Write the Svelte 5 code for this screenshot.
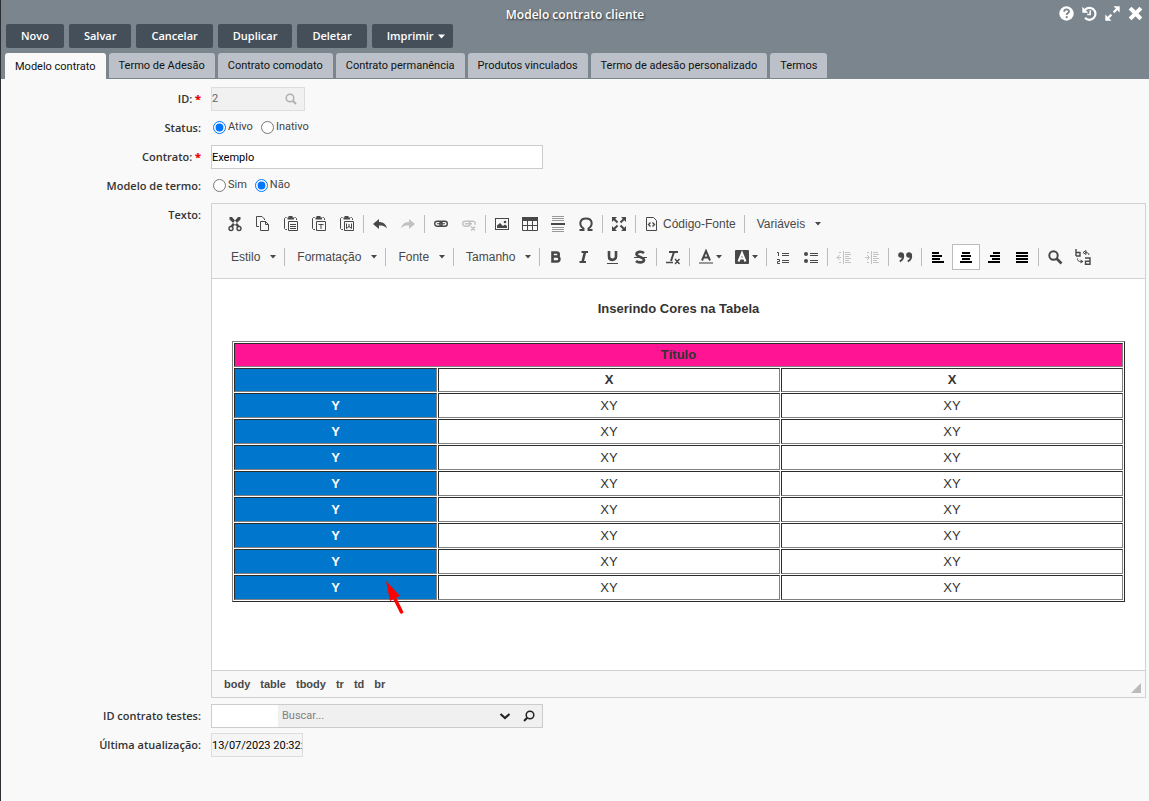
<script lang="ts">
  const actions = ['Novo', 'Salvar', 'Cancelar', 'Duplicar', 'Deletar'];
  const tabs = [
    'Modelo contrato',
    'Termo de Adesão',
    'Contrato comodato',
    'Contrato permanência',
    'Produtos vinculados',
    'Termo de adesão personalizado',
    'Termos',
  ];
  const path = ['body', 'table', 'tbody', 'tr', 'td', 'br'];
  const rows = Array.from({ length: 8 }, () => ['Y', 'XY', 'XY']);

  let activeTab = $state(0);
  let status = $state('ativo');
  let termo = $state('nao');
  let contrato = $state('Exemplo');
  let contratoTeste = $state('');
  let busca = $state('');
  let align = $state('center');

  const alignments = [
    { id: 'left', title: 'Alinhar Esquerda', d: 'M2 3h7v2H2zM2 6h10v2H2zM2 9h8v2H2zM2 12h12v2H2z' },
    { id: 'center', title: 'Centralizar', d: 'M4 3h8v2H4zM3 6h10v2H3zM4 9h8v2H4zM2 12h12v2H2z' },
    { id: 'right', title: 'Alinhar Direita', d: 'M7 3h7v2H7zM4 6h10v2H4zM6 9h8v2H6zM2 12h12v2H2z' },
    { id: 'justify', title: 'Justificado', d: 'M2 3h12v2H2zM2 6h12v2H2zM2 9h12v2H2zM2 12h12v2H2z' },
  ];
</script>

{#snippet sep()}
  <span class="sep"></span>
{/snippet}

{#snippet caret()}
  <svg class="caret" width="6" height="4" viewBox="0 0 6 4"><path d="M0 0h6L3 3.5z" /></svg>
{/snippet}

{#snippet combo(label: string)}
  <button class="combo" type="button">{label}{@render caret()}</button>
{/snippet}

<!-- clipboard outline shared by the three paste buttons -->
{#snippet clipboard()}
  <path d="M3.5 1.5h-1l-1 1v10l1 1H4M11.500 1.500h1l1 1V4" class="line" />
  <path d="M4.500 2.500v1h6.500v-2H9.500V0h-4v1.500h-1z" />
  <path d="M5.5 5.5h9v9h-9z" class="line" />
{/snippet}

<div class="window">
  <header>
    <div class="titlebar">
      <h1>Modelo contrato cliente</h1>
      <div class="tools">
        <button type="button" aria-label="Ajuda">
          <svg width="15" height="15" viewBox="0 0 15 15">
            <circle cx="7.5" cy="7.5" r="7.2" fill="#fff" />
            <path d="M5.2 5.8c0-3.2 4.8-3 4.8-.4 0 1.7-2.3 1.6-2.3 3.6" fill="none" stroke="#7b858e" stroke-width="1.9" />
            <rect x="6.7" y="10.2" width="2" height="2" fill="#7b858e" />
          </svg>
        </button>
        <button type="button" aria-label="Histórico">
          <svg width="15" height="15" viewBox="0 0 15 15">
            <path d="M2.8 4A6 6 0 1 1 3 11.8" fill="none" stroke="#fff" stroke-width="2.2" />
            <path d="M.3 .8v6h6z" fill="#fff" />
            <path d="M8.2 4.2v4.3H5.2" fill="none" stroke="#fff" stroke-width="1.5" />
          </svg>
        </button>
        <button type="button" aria-label="Expandir">
          <svg width="15" height="15" viewBox="0 0 15 15">
            <path d="M8.5.3h6.2v6.2zM.3 8.5v6.2h6.2z" fill="#fff" />
            <path d="M12 3L8.6 6.4M6.4 8.6L3 12" stroke="#fff" stroke-width="2.2" />
          </svg>
        </button>
        <button type="button" aria-label="Fechar">
          <svg width="15" height="15" viewBox="0 0 15 15">
            <path d="M3.500 3.500l8 8M11.500 3.500l-8 8" stroke="#fff" stroke-width="4" stroke-linecap="square" />
          </svg>
        </button>
      </div>
    </div>
    <div class="actions">
      {#each actions as action}
        <button type="button">{action}</button>
      {/each}
      <button type="button" class="drop">Imprimir
        <svg width="7" height="5" viewBox="0 0 7 5"><path d="M0 0.5h7L3.5 4.5z" fill="#fff" /></svg>
      </button>
    </div>
    <nav>
      {#each tabs as tab, i}
        <button type="button" class:active={activeTab === i} onclick={() => (activeTab = i)}>{tab}</button>
      {/each}
    </nav>
  </header>

  <form>
    <label class="name" for="id">ID: <b>*</b></label>
    <div class="lookup">
      <input id="id" type="text" value="2" readonly />
      <svg width="12" height="12" viewBox="0 0 12 12" fill="none" stroke="#b0b0b0">
        <circle cx="5" cy="5" r="3.8" stroke-width="1.5" />
        <path d="M7.8 7.8l3.2 3.2" stroke-width="2" />
      </svg>
    </div>

    <span class="name" id="status">Status:</span>
    <div class="radios" role="radiogroup" aria-labelledby="status">
      <label><input type="radio" name="status" value="ativo" bind:group={status} />Ativo</label>
      <label><input type="radio" name="status" value="inativo" bind:group={status} />Inativo</label>
    </div>

    <label class="name" for="contrato">Contrato: <b>*</b></label>
    <input id="contrato" class="field" type="text" bind:value={contrato} />

    <span class="name" id="termo">Modelo de termo:</span>
    <div class="radios" role="radiogroup" aria-labelledby="termo">
      <label><input type="radio" name="termo" value="sim" bind:group={termo} />Sim</label>
      <label><input type="radio" name="termo" value="nao" bind:group={termo} />Não</label>
    </div>

    <span class="name">Texto:</span>
    <div class="editor">
      <div class="toolbar">
        <div class="bar">
          <button type="button" title="Recortar">
            <svg viewBox="0 0 16 16">
              <path d="M2.500 1H5l8 9.500-2.500 .8L2.500 3.500zM13.500 1H11L3 10.500l2.500 .8 8-7.800z" />
              <circle cx="4" cy="12.500" r="2" class="line thick" />
              <circle cx="12" cy="12.500" r="2" class="line thick" />
            </svg>
          </button>
          <button type="button" title="Copiar">
            <svg viewBox="0 0 16 16">
              <path d="M4 10.500H1.500v-10H7l2.500 2.500v1M5.500 5.500h5l3 3v6h-8zM10.500 5.500v3h3" class="line" />
            </svg>
          </button>
          <button type="button" title="Colar">
            <svg viewBox="0 0 16 16">{@render clipboard()}<path d="M7 8.500h6M7 10.500h6M7 12.500h6" class="line" /></svg>
          </button>
          <button type="button" title="Colar como Texto sem Formatação">
            <svg viewBox="0 0 16 16">{@render clipboard()}<path d="M7.500 8.500h5M10 8.500v4.500" class="line" /></svg>
          </button>
          <button type="button" title="Colar do Word">
            <svg viewBox="0 0 16 16">{@render clipboard()}<path d="M7.500 7.500v5l2.500-2 2.500 2v-5M10 8v3" class="line" /></svg>
          </button>
          {@render sep()}
          <button type="button" title="Desfazer">
            <svg viewBox="0 0 16 16"><path d="M1 8l6-5v3c4 0 7 2 8 6.500-2-2.500-4.500-3-8-3V13z" /></svg>
          </button>
          <button type="button" title="Refazer" disabled>
            <svg viewBox="0 0 16 16"><path d="M15 8L9 3v3c-4 0-7 2-8 6.500 2-2.500 4.500-3 8-3V13z" /></svg>
          </button>
          {@render sep()}
          <button type="button" title="Inserir Link">
            <svg viewBox="0 0 16 16">
              <rect x="1.700" y="5.200" width="7.500" height="5" rx="2.500" class="line thick" />
              <rect x="6.800" y="5.200" width="7.500" height="5" rx="2.500" class="line thick" />
              <path d="M4 7.200h8v1H4z" />
            </svg>
          </button>
          <button type="button" title="Remover Link" disabled>
            <svg viewBox="0 0 16 16">
              <rect x="1.700" y="5.200" width="7.500" height="5" rx="2.500" class="line thick" />
              <path d="M7 5.200h5a2.500 2.500 0 0 1 2 3.500M4 7.700h7M10 10.500l4 4M14 10.500l-4 4" class="line thick" />
            </svg>
          </button>
          {@render sep()}
          <button type="button" title="Imagem">
            <svg viewBox="0 0 16 16">
              <rect x="1.500" y="2.500" width="13" height="11" class="line" />
              <path d="M3 12V9.500L6 7l3 3 2-1.500 2 1.500v2z" />
              <circle cx="11" cy="6" r="1.300" />
            </svg>
          </button>
          <button type="button" title="Tabela">
            <svg viewBox="0 0 16 16">
              <path d="M0 1h16v4H0z" />
              <path d="M.5 2v12.500h15V2M0 9.500h16M5.500 5v9.500M10.500 5v9.500" class="line" />
            </svg>
          </button>
          <button type="button" title="Inserir Linha Horizontal">
            <svg viewBox="0 0 16 16">
              <path d="M2 .5h12M2 2.500h12M2 4.500h12M2 11.500h12M2 13.500h12M2 15.500h12" class="line pale" />
              <path d="M1 7h14v2H1z" />
            </svg>
          </button>
          <button type="button" title="Inserir Caractere Especial">
            <svg viewBox="0 0 16 16">
              <path d="M1.500 14h4v-1.500C.5 9 1.500 2.500 8 2.500s7.500 6.500 2.500 10V14h4" class="line bold" />
            </svg>
          </button>
          {@render sep()}
          <button type="button" title="Maximizar">
            <svg viewBox="0 0 16 16">
              <path d="M1 1h5L1 6zM15 1v5l-5-5zM1 15v-5l5 5zM15 15h-5l5-5z" />
              <path d="M3 3l3.500 3.500M13 3L9.500 6.500M3 13l3.500-3.500M13 13L9.500 9.500" class="line bold" />
            </svg>
          </button>
          {@render sep()}
          <button type="button" class="source">
            <svg viewBox="0 0 16 16">
              <path d="M2.500 1.500h7l3 3v10h-10z" class="line" />
              <path d="M6.500 6.500L4.500 8.500l2 2M8.500 6.500l2 2-2 2" class="line thick" />
            </svg>
            Código-Fonte
          </button>
          {@render sep()}
          {@render combo('Variáveis')}
        </div>

        <div class="bar">
          {@render combo('Estilo')}
          {@render sep()}
          {@render combo('Formatação')}
          {@render sep()}
          {@render combo('Fonte')}
          {@render sep()}
          {@render combo('Tamanho')}
          {@render sep()}
          <button type="button" title="Negrito">
            <svg viewBox="0 0 16 16">
              <path d="M4.500 3.500h4c3 0 3 4 0 4h-4zM4.500 7.500H9c3.200 0 3.200 5 0 5H4.500z" class="line heavy" />
            </svg>
          </button>
          <button type="button" title="Itálico">
            <svg viewBox="0 0 16 16">
              <path d="M5.500 3h6.500M3.500 13H10" class="line bold" />
              <path d="M9 3L6.500 13" class="line heavy" />
            </svg>
          </button>
          <button type="button" title="Sublinhado">
            <svg viewBox="0 0 16 16">
              <path d="M5 2v5.500c0 4.500 7 4.500 7 0V2" class="line heavy" />
              <path d="M3 14h11v1H3z" />
            </svg>
          </button>
          <button type="button" title="Tachado">
            <svg viewBox="0 0 16 16">
              <path d="M12 4C9.500 2 4.500 2.500 4.500 5.200S12 8 12 11s-6 3-8 1" class="line heavy" />
              <path d="M2 8h13v1H2z" />
            </svg>
          </button>
          {@render sep()}
          <button type="button" title="Remover Formatação">
            <svg viewBox="0 0 16 16">
              <path d="M4 3h9M9 3L6 12" class="line bold" />
              <path d="M1 13.500h7M10 10l4.500 5M14.500 10L10 15" class="line thick" />
            </svg>
          </button>
          {@render sep()}
          <button type="button" title="Cor do Texto">
            <svg viewBox="0 0 16 16">
              <path d="M4 11.500l4-9.500 4 9.500M5.500 8.500h5" class="line bold" />
              <path d="M1 13h14v2H1z" class="shade" />
            </svg>
            {@render caret()}
          </button>
          <button type="button" title="Cor do Fundo">
            <svg viewBox="0 0 16 16">
              <rect x="1" y="1" width="14" height="14" rx="1" />
              <path d="M4.500 12.500L8 4l3.500 8.500M5.500 9.500h5" class="line bold white" />
            </svg>
            {@render caret()}
          </button>
          {@render sep()}
          <button type="button" title="Lista numerada">
            <svg viewBox="0 0 16 16">
              <path d="M2 3.500h1.500V7M2 10.500h2.500v2H2.500v2H5M7 4.500h7M7 6.500h7M7 11.500h7M7 13.500h7" class="line" />
            </svg>
          </button>
          <button type="button" title="Lista sem números">
            <svg viewBox="0 0 16 16">
              <circle cx="3" cy="5" r="2" />
              <circle cx="3" cy="12" r="2" />
              <path d="M7 4.500h8M7 6.500h8M7 11.500h8M7 13.500h8" class="line" />
            </svg>
          </button>
          {@render sep()}
          <button type="button" title="Diminuir Recuo" disabled>
            <svg viewBox="0 0 16 16">
              <path d="M1 8.500h4M3.500 6L1 8.500 3.500 11M3 3.500h2M3 13.500h2M7.500 2v13M9 3.500h5M9 5.500h6M9 7.500h4M9 9.500h6M9 11.500h4M9 13.500h6" class="line" />
            </svg>
          </button>
          <button type="button" title="Aumentar Recuo" disabled>
            <svg viewBox="0 0 16 16">
              <path d="M1 8.500h4M3 6l2.500 2.500L3 11M3 3.500h2M3 13.500h2M7.500 2v13M9 3.500h5M9 5.500h6M9 7.500h4M9 9.500h6M9 11.500h4M9 13.500h6" class="line" />
            </svg>
          </button>
          {@render sep()}
          <button type="button" title="Citação">
            <svg viewBox="0 0 16 16">
              <circle cx="4" cy="6" r="2.800" />
              <circle cx="12" cy="6" r="2.800" />
              <path d="M5.800 5c1 3.500-.5 6-3 7.500M13.800 5c1 3.500-.5 6-3 7.500" class="line bold" />
            </svg>
          </button>
          {@render sep()}
          {#each alignments as item}
            <button type="button" title={item.title} class:on={align === item.id} onclick={() => (align = item.id)}>
              <svg viewBox="0 0 16 16"><path d={item.d} fill="#000" /></svg>
            </button>
          {/each}
          {@render sep()}
          <button type="button" title="Localizar">
            <svg viewBox="0 0 16 16">
              <circle cx="6.500" cy="6.500" r="4.200" class="line bold" />
              <path d="M9.500 9.500l5 5" class="line heavy" />
            </svg>
          </button>
          <button type="button" title="Substituir">
            <svg viewBox="0 0 16 16">
              <path d="M1 0v7M1 3.500h4v3.500H1" class="line thick" />
              <path d="M11 1.500v4L8 3.500zM10 3.500c2.500 0 4 .5 4 2.500M2.500 9.500c0 2 1 3 3 3" class="line" />
              <path d="M5.500 10.500v4l3-2z" />
              <path d="M10 9h5v6.300h-4.500v-3H15" class="line thick" />
            </svg>
          </button>
        </div>
      </div>

      <div class="content">
        <p>Inserindo Cores na Tabela</p>
        <table>
          <colgroup><col class="first" /><col /><col /></colgroup>
          <tbody>
            <tr class="heading"><th class="pink" colspan="3">Título</th></tr>
            <tr class="heading"><th class="blue"></th><th>X</th><th>X</th></tr>
            {#each rows as row}
              <tr><th class="blue">{row[0]}</th><td>{row[1]}</td><td>{row[2]}</td></tr>
            {/each}
          </tbody>
        </table>
        <svg class="pointer" width="18" height="34" viewBox="0 0 18 34">
          <path d="M0 0l14 15-4 1.500-6 3.500z" fill="#f00" />
          <path d="M7.500 15l8 16" stroke="#f00" stroke-width="3.500" stroke-linecap="round" />
        </svg>
      </div>

      <div class="path">
        {#each path as item}<a href="#{item}">{item}</a>{/each}
        <svg width="10" height="10" viewBox="0 0 10 10"><path d="M10 0v10H0z" fill="#bbb" /></svg>
      </div>
    </div>

    <label class="name" for="teste">ID contrato testes:</label>
    <div class="search">
      <input id="teste" class="code" type="text" bind:value={contratoTeste} />
      <input class="query" type="text" placeholder="Buscar..." aria-label="Buscar contrato" bind:value={busca} />
      <button type="button" aria-label="Abrir lista">
        <svg width="12" height="12" viewBox="0 0 12 12"><path d="M1.500 4L6 8l4.500-4" fill="none" stroke="#222" stroke-width="2.200" /></svg>
      </button>
      <button type="button" aria-label="Pesquisar">
        <svg width="12" height="12" viewBox="0 0 12 12" fill="none" stroke="#222">
          <circle cx="7" cy="5" r="3.800" stroke-width="1.500" />
          <path d="M4.200 7.800L1 11" stroke-width="2" />
        </svg>
      </button>
    </div>

    <label class="name" for="data">Última atualização:</label>
    <input id="data" class="date" type="text" value="13/07/2023 20:32:05" readonly />
  </form>
</div>

<style>
  :global(body) {
    margin: 0;
    background: #f9f9f9;
  }

  .window {
    box-sizing: border-box;
    min-height: 100vh;
    border-left: 1px solid #2b2f33;
    background: #f9f9f9;
    font: 11px/16px Roboto, 'Open Sans', sans-serif;
    color: #333;
  }

  button,
  input {
    box-sizing: border-box;
    margin: 0;
    font: inherit;
  }

  button {
    border: 0;
    padding: 0;
    background: none;
    color: inherit;
    cursor: pointer;
    white-space: nowrap;
  }

  header {
    background: #7b858e;
    padding: 0 4px;
  }

  .titlebar {
    position: relative;
    height: 24px;
    padding-top: 7px;
    box-sizing: border-box;
  }

  h1,
  .name,
  .actions button {
    font-family: 'Open Sans', 'Noto Sans', sans-serif;
    font-weight: 600;
  }

  h1 {
    margin: 0;
    font-size: 12px;
    line-height: 16px;
    text-align: center;
    color: #fff;
    text-shadow: 1px 1px 2px #333;
  }

  .tools {
    position: absolute;
    top: 6px;
    right: 2px;
    display: flex;
    gap: 8px;
  }

  .tools svg,
  form svg {
    display: block;
  }

  .actions {
    display: flex;
    gap: 5px;
    padding: 0 1px;
  }

  .actions button {
    height: 24px;
    padding: 0 15px;
    border-radius: 2px;
    background: #454f5a;
    color: #fff;
  }

  .actions .drop {
    display: flex;
    align-items: center;
    gap: 4px;
    padding-right: 8px;
  }

  nav {
    display: flex;
    align-items: flex-start;
    gap: 3px;
    height: 26px;
    padding-top: 5px;
  }

  nav button {
    height: 25px;
    padding: 1px 10px 0;
    border-radius: 3px 3px 0 0;
    background: #bcc1c9;
    color: #111;
  }

  nav .active {
    height: 26px;
    background: #f9f9f9;
  }

  form {
    display: grid;
    grid-template-columns: 200px minmax(0, 1fr);
    gap: 5px 10px;
    padding: 8px 3px 8px 0;
  }

  .name {
    line-height: 24px;
    text-align: right;
  }

  .name b {
    color: #e00;
  }

  .lookup {
    display: flex;
    align-items: center;
    box-sizing: border-box;
    width: 94px;
    height: 24px;
    padding-right: 7px;
    border: 1px solid #ddd;
    background: #f1f1f1;
  }

  .lookup input {
    flex: 1;
    min-width: 0;
    border: 0;
    padding: 0;
    background: none;
    color: #666;
  }

  .radios {
    display: flex;
    gap: 8px;
    height: 22px;
    padding-left: 2px;
    color: #444;
  }

  .radios label {
    display: flex;
    align-items: center;
    gap: 2px;
  }

  .radios input {
    width: 13px;
    height: 13px;
  }

  .field,
  .date {
    width: 332px;
    height: 24px;
    padding: 0;
    border: 1px solid #ccc;
    background: #fff;
    color: #000;
  }

  .date {
    width: 92px;
    border-color: #ddd;
    background: #f5f5f5;
  }

  .editor {
    margin-bottom: 1px;
    border: 1px solid #d1d1d1;
    background: #fff;
    font: 12px/16px 'Liberation Sans', Arial, sans-serif;
    color: #484848;
  }

  .toolbar {
    display: flex;
    flex-direction: column;
    gap: 7px;
    padding: 7px 8px 8px 9px;
    border-bottom: 1px solid #d1d1d1;
    background: #f8f8f8;
  }

  .bar {
    display: flex;
    align-items: center;
  }

  .bar button {
    display: flex;
    align-items: center;
    gap: 2px;
    height: 26px;
    padding: 0 6px;
  }

  .bar button:disabled {
    opacity: 0.3;
  }

  .bar .on {
    padding: 0 5px;
    border: 1px solid #bcbcbc;
    background: #fff;
  }

  .bar .combo {
    gap: 10px;
    padding: 0 6px 0 10px;
  }

  .bar .source {
    gap: 3px;
  }

  .bar svg {
    width: 16px;
    height: 16px;
    fill: #484848;
  }

  .bar .caret {
    width: 6px;
    height: 4px;
  }

  .line {
    fill: none;
    stroke: #484848;
    stroke-width: 1px;
  }

  .thick {
    stroke-width: 1.4px;
  }

  .bold {
    stroke-width: 2px;
  }

  .heavy {
    stroke-width: 2.6px;
  }

  .pale {
    stroke: #999;
  }

  .white {
    stroke: #fff;
  }

  .shade {
    fill: #999;
  }

  .sep {
    width: 1px;
    height: 18px;
    margin: 0 2px;
    background: #bcbcbc;
  }

  .content {
    position: relative;
    box-sizing: border-box;
    min-height: 391px;
    padding: 19px 20px;
    font-size: 13px;
    line-height: 21px;
    color: #333;
    text-align: center;
  }

  .content p {
    margin: 0 0 22px;
    font-weight: 700;
  }

  table {
    width: 100%;
    table-layout: fixed;
    border: 1px outset gray;
    border-spacing: 1px;
  }

  .first {
    width: 203px;
  }

  th,
  td {
    height: 21px;
    padding: 1px;
    border: 1px inset gray;
  }

  .heading th {
    height: 20px;
    line-height: 20px;
  }

  .pink {
    background: #ff1493;
  }

  .blue {
    background: #07c;
    color: #fff;
  }

  .pointer {
    position: absolute;
    left: 174px;
    top: 302px;
  }

  .path {
    display: flex;
    align-items: center;
    gap: 10px;
    height: 26px;
    padding: 0 4px 0 12px;
    border-top: 1px solid #d1d1d1;
    background: #f8f8f8;
    font-size: 11px;
    font-weight: 700;
  }

  .path a {
    color: inherit;
    text-decoration: none;
  }

  .path svg {
    align-self: flex-end;
    margin: 0 0 4px auto;
  }

  .search {
    display: flex;
    box-sizing: border-box;
    width: 332px;
    height: 24px;
    padding-right: 1px;
    border: 1px solid #ccc;
    background: #f0f0f0;
  }

  .search input {
    border: 0;
    padding: 0;
    background: none;
  }

  .search .code {
    width: 66px;
    background: #fff;
  }

  .search .query {
    flex: 1;
    min-width: 0;
    padding-left: 4px;
  }

  .query::placeholder {
    color: #808080;
  }

  .search button {
    display: grid;
    place-items: center;
    width: 24px;
  }
</style>
